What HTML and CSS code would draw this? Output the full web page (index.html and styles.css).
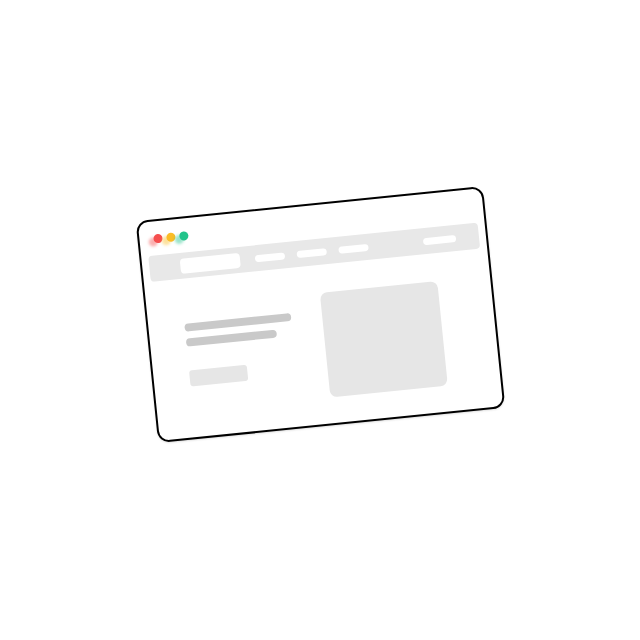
FILE: index.html
```html
<!DOCTYPE html>
<html lang="en">
<head>
    <meta charset="UTF-8">
    <meta name="viewport" content="width=device-width, initial-scale=1.0">
    <title>Browser Wireframe</title>
    <link rel="stylesheet" href="styles.css">
</head>
<body>
    <div class="stage">
        <div class="browser">
            <div class="window-dots">
                <span class="dot red"></span>
                <span class="dot yellow"></span>
                <span class="dot green"></span>
            </div>
            <div class="navbar">
                <div class="logo"></div>
                <div class="nav-link"></div>
                <div class="nav-link"></div>
                <div class="nav-link"></div>
                <div class="nav-cta"></div>
            </div>
            <div class="hero">
                <div class="hero-text">
                    <div class="line long"></div>
                    <div class="line short"></div>
                    <div class="hero-button"></div>
                </div>
                <div class="hero-image"></div>
            </div>
        </div>
    </div>
</body>
</html>
```

FILE: styles.css
```css
* {
    box-sizing: border-box;
}

body {
    margin: 0;
    background-color: #fff;
    font-family: "Liberation Sans", Arial, sans-serif;
}

.stage {
    height: 640px;
    display: flex;
    align-items: center;
    justify-content: center;
    padding-bottom: 12px;
}

.browser {
    width: 349px;
    height: 223px;
    padding: 7px;
    background-color: #fff;
    border: 2px solid #000;
    border-radius: 12px;
    box-shadow: 0 1px 2px rgba(0, 0, 0, 0.12);
    transform: rotate(-5.8deg);
}

.window-dots {
    display: flex;
    gap: 4px;
    margin: 6px 0 0 7px;
}

.dot {
    width: 9px;
    height: 9px;
    border-radius: 50%;
}

.dot.red {
    background-color: #f54e4e;
    box-shadow: -5px 3px 3px rgba(245, 78, 78, 0.45);
}

.dot.yellow {
    background-color: #fbbd26;
    box-shadow: -5px 3px 3px rgba(251, 189, 38, 0.45);
}

.dot.green {
    background-color: #22c48b;
    box-shadow: -5px 3px 3px rgba(34, 196, 139, 0.45);
}

.navbar {
    display: flex;
    align-items: center;
    gap: 12px;
    height: 26px;
    margin-top: 12px;
    padding: 0 23px 0 31px;
    background-color: #e8e8e8;
    border-radius: 4px;
}

.logo {
    width: 60px;
    height: 15px;
    margin-right: 3px;
    background-color: #fff;
    border-radius: 4px;
}

.nav-link {
    width: 30px;
    height: 7px;
    background-color: #fff;
    border-radius: 4px;
}

.nav-cta {
    width: 33px;
    height: 7px;
    margin-left: auto;
    background-color: #fff;
    border-radius: 4px;
}

.hero {
    display: flex;
    gap: 30px;
    margin-top: 28px;
    padding: 0 46px 0 29px;
}

.hero-text {
    flex: 1;
    display: flex;
    flex-direction: column;
    padding-top: 17px;
}

.line {
    height: 8px;
    background-color: #c9c9c9;
    border-radius: 4px;
}

.line.long {
    width: 107px;
}

.line.short {
    width: 91px;
    margin-top: 7px;
}

.hero-button {
    width: 58px;
    height: 16px;
    margin-top: 24px;
    background-color: #e6e6e6;
    border-radius: 3px;
}

.hero-image {
    width: 118px;
    height: 105px;
    background-color: #e6e6e6;
    border-radius: 7px;
}
```
